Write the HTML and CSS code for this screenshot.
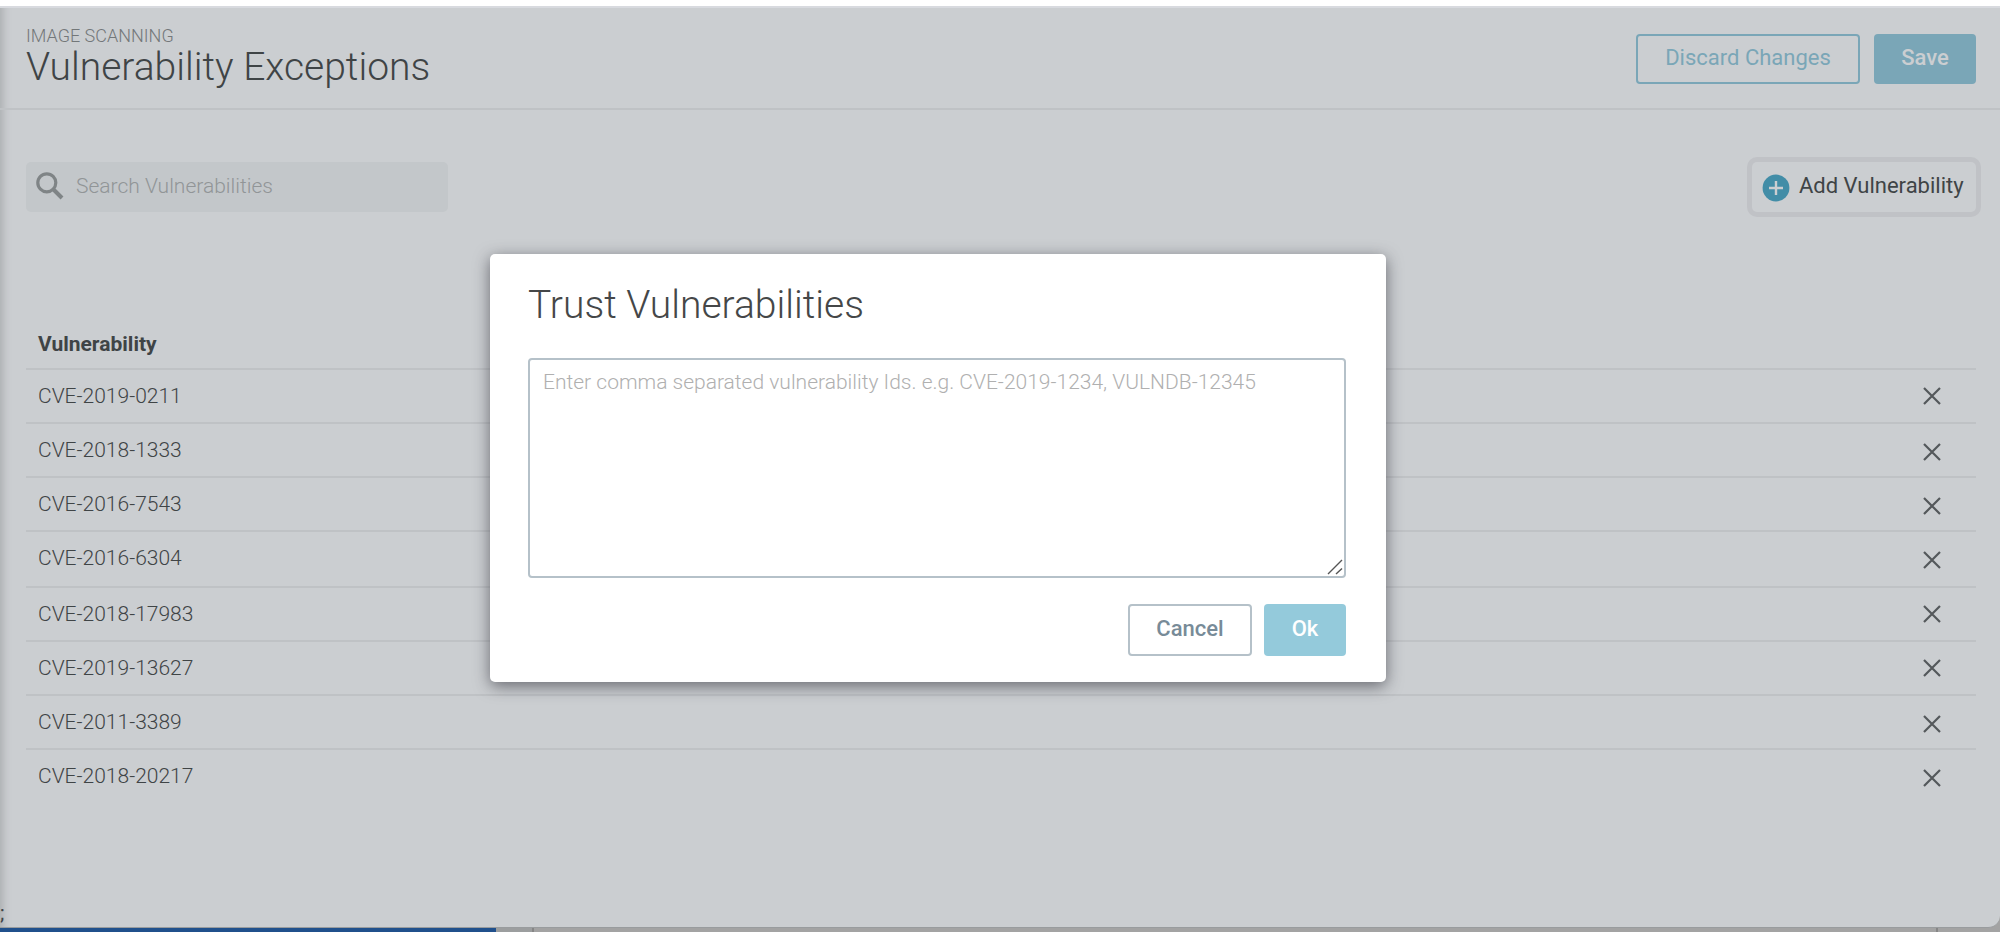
FILE: index.html
```html
<!DOCTYPE html>
<html lang="en">
<head>
<meta charset="utf-8">
<title>Vulnerability Exceptions</title>
<link rel="stylesheet" href="styles.css">
</head>
<body>
<div class="page">
  <main class="panel">
    <header class="header">
      <div class="heading">
        <div class="eyebrow">IMAGE SCANNING</div>
        <h1 class="title">Vulnerability Exceptions</h1>
      </div>
      <div class="actions">
        <button class="btn discard">Discard Changes</button>
        <button class="btn save">Save</button>
      </div>
    </header>
    <section class="toolbar">
      <div class="search">
        <svg class="search-icon" viewBox="0 0 28 28"><circle cx="10.8" cy="10.8" r="9" fill="none" stroke="#7f8486" stroke-width="3.2"/><path d="M17 17L26 26" stroke="#7f8486" stroke-width="4"/></svg>
        <span class="search-text">Search Vulnerabilities</span>
      </div>
      <button class="add">
        <svg class="add-icon" viewBox="0 0 28 28"><circle cx="14" cy="14" r="13.4" fill="#428da7"/><path d="M14 7v14M7 14h14" stroke="#cbced1" stroke-width="2.4"/></svg>
        <span class="add-text">Add Vulnerability</span>
      </button>
    </section>
    <section class="table">
      <div class="thead">Vulnerability</div>
      <div class="row"><span class="cve">CVE-2019-0211</span><svg class="x" viewBox="0 0 20 20"><path d="M2 2L18 18M18 2L2 18"/></svg></div>
      <div class="row low"><span class="cve">CVE-2018-1333</span><svg class="x" viewBox="0 0 20 20"><path d="M2 2L18 18M18 2L2 18"/></svg></div>
      <div class="row low"><span class="cve">CVE-2016-7543</span><svg class="x" viewBox="0 0 20 20"><path d="M2 2L18 18M18 2L2 18"/></svg></div>
      <div class="row low tall"><span class="cve">CVE-2016-6304</span><svg class="x" viewBox="0 0 20 20"><path d="M2 2L18 18M18 2L2 18"/></svg></div>
      <div class="row"><span class="cve">CVE-2018-17983</span><svg class="x" viewBox="0 0 20 20"><path d="M2 2L18 18M18 2L2 18"/></svg></div>
      <div class="row"><span class="cve">CVE-2019-13627</span><svg class="x" viewBox="0 0 20 20"><path d="M2 2L18 18M18 2L2 18"/></svg></div>
      <div class="row low"><span class="cve">CVE-2011-3389</span><svg class="x" viewBox="0 0 20 20"><path d="M2 2L18 18M18 2L2 18"/></svg></div>
      <div class="row low"><span class="cve">CVE-2018-20217</span><svg class="x" viewBox="0 0 20 20"><path d="M2 2L18 18M18 2L2 18"/></svg></div>
    </section>
    <div class="stray">;</div>
  </main>
  <div class="strip"><div class="strip-blue"></div><div class="strip-a"></div><div class="strip-b"></div><div class="strip-c"></div></div>
</div>
<div class="modal">
  <h2 class="modal-title">Trust Vulnerabilities</h2>
  <div class="area">
    <span class="placeholder">Enter comma separated vulnerability Ids. e.g. CVE-2019-1234, VULNDB-12345</span>
    <svg class="grip" viewBox="0 0 16 16"><path d="M1 15L15 1M9 15L15 9.4"/></svg>
  </div>
  <div class="modal-actions">
    <button class="btn cancel">Cancel</button>
    <button class="btn ok">Ok</button>
  </div>
</div>
</body>
</html>
```
FILE: styles.css
```css
* { box-sizing: border-box; }
body { margin: 0; font-family: Roboto, "Liberation Sans", sans-serif; color: #3f4446; background: #fff; overflow: hidden; }
h1, h2 { margin: 0; font-weight: 300; }
button { margin: 0; padding: 0; font-family: inherit; background: none; border: 0; white-space: nowrap; }
svg { display: block; flex: none; }
.page { height: 932px; padding-top: 6px; display: flex; flex-direction: column; background: linear-gradient(#fff 50%, #a3a3a3 50%); }
.panel { height: 922px; background: #cbced1; border-top: 2px solid #d8dadf; border-bottom: 1px solid #999c9e; border-bottom-right-radius: 12px; box-shadow: inset 12px 0 10px -10px #a5a8ab; display: flex; flex-direction: column; }
.header { height: 102px; flex: none; border-bottom: 2px solid #bfc2c5; padding: 0 24px 0 26px; display: flex; justify-content: space-between; }
.heading { padding-top: 17px; }
.eyebrow { font-size: 18px; line-height: 22px; font-weight: 300; color: #737779; }
.title { font-size: 39px; line-height: 40px; }
.actions { display: flex; gap: 14px; padding-top: 26px; }
.btn { height: 50px; border-radius: 4px; font-size: 22px; line-height: 44px; padding-bottom: 2px; }
.discard { width: 224px; border: 2px solid #7aa6b7; color: #7aa6b7; }
.save { width: 102px; background: #7aa6b7; color: #cbced1; font-weight: 500; }
.toolbar { height: 160px; flex: none; padding: 52px 24px 0 26px; display: flex; justify-content: space-between; align-items: flex-start; }
.search { width: 422px; height: 50px; border-radius: 5px; background: #c3c7ca; display: flex; padding-left: 10px; }
.search-icon { width: 28px; height: 28px; margin-top: 10px; }
.search-text { font-size: 21px; line-height: 48px; font-weight: 300; color: #919597; margin-left: 12px; }
.add { width: 224px; height: 50px; border-radius: 5px; box-shadow: 0 0 0 5px #c0c2c6; display: flex; padding-left: 10px; }
.add-icon { width: 28px; height: 28px; margin-top: 12px; }
.add-text { font-size: 22px; line-height: 48px; color: #3f4446; margin-left: 9px; }
.table { margin: 0 24px 0 26px; }
.thead { height: 98px; padding: 60px 0 0 12px; font-size: 21px; line-height: 28px; font-weight: 700; }
.row { height: 54px; border-top: 2px solid #bfc2c5; display: flex; justify-content: space-between; padding: 0 34px 0 12px; }
.tall { height: 56px; }
.cve { font-size: 21px; line-height: 52px; font-weight: 300; }
.x { width: 20px; height: 20px; margin-top: 16px; fill: none; stroke: #54585b; stroke-width: 2.2; }
.low .x { margin-top: 18px; }
.stray { margin-top: auto; font-size: 21px; line-height: 28px; margin-bottom: 0; }
.strip { height: 4px; display: flex; }
.strip-blue { width: 496px; background: #20508c; }
.strip-a { width: 38px; background: #9c9e9f; border-right: 2px solid #868686; }
.strip-b { width: 1404px; background: #a3a3a3; border-right: 2px solid #868686; }
.strip-c { flex: 1; background: #a3a3a3; }
.modal { position: absolute; left: 490px; top: 254px; width: 896px; height: 428px; background: #fff; border-radius: 5px; box-shadow: 0 4px 16px rgba(50,50,60,.65); padding: 28px 40px 0 38px; }
.modal-title { font-size: 39px; line-height: 46px; height: 76px; color: #454748; }
.area { position: relative; height: 220px; border: 2px solid #b5c1c9; border-radius: 4px; padding: 8px 13px; }
.placeholder { display: block; font-size: 21px; line-height: 28px; font-weight: 300; color: #b0b0b0; white-space: nowrap; }
.grip { position: absolute; right: 1px; bottom: 1px; width: 16px; height: 16px; fill: none; stroke: #555; stroke-width: 1.4; }
.modal-actions { display: flex; justify-content: flex-end; gap: 12px; padding-top: 26px; }
.modal-actions .btn { height: 52px; }
.cancel { width: 124px; border: 2px solid #b5c1c9; color: #788b98; font-weight: 500; }
.ok { width: 82px; background: #94cadb; color: #fff; font-weight: 500; }
```
